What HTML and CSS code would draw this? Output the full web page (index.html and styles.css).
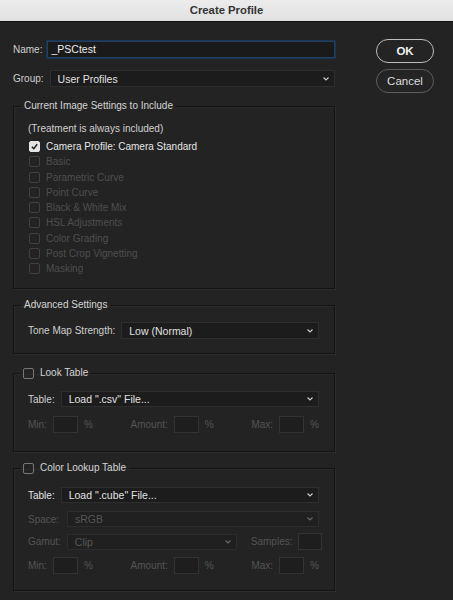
FILE: index.html
```html
<!DOCTYPE html>
<html>
<head>
<meta charset="utf-8">
<title>Create Profile</title>
<link rel="stylesheet" href="styles.css">
</head>
<body>
<div class="titlebar">Create Profile</div>
<div class="content">
  <div class="left">
    <div class="row name-row">
      <span class="lbl">Name:</span>
      <div class="textfield focus">_PSCtest</div>
    </div>
    <div class="row group-row">
      <span class="lbl">Group:</span>
      <div class="select"><span>User Profiles</span><svg class="chev" viewBox="0 0 6 4" width="6" height="4"><polyline points="0.5,0.5 3,3 5.5,0.5" fill="none" stroke="#c8c8c8" stroke-width="1.2"/></svg></div>
    </div>

    <fieldset class="box box1">
      <legend>Current Image Settings to Include</legend>
      <div class="note">(Treatment is always included)</div>
      <div class="checks">
        <div class="check on"><span class="cb checked"><svg viewBox="0 0 10 10" width="9" height="9"><polyline points="2,5.2 4.2,7.5 8,2.5" fill="none" stroke="#1a1a1a" stroke-width="1.6"/></svg></span>Camera Profile: Camera Standard</div>
        <div class="check dis"><span class="cb"></span>Basic</div>
        <div class="check dis"><span class="cb"></span>Parametric Curve</div>
        <div class="check dis"><span class="cb"></span>Point Curve</div>
        <div class="check dis"><span class="cb"></span>Black &amp; White Mix</div>
        <div class="check dis"><span class="cb"></span>HSL Adjustments</div>
        <div class="check dis"><span class="cb"></span>Color Grading</div>
        <div class="check dis"><span class="cb"></span>Post Crop Vignetting</div>
        <div class="check dis"><span class="cb"></span>Masking</div>
      </div>
    </fieldset>

    <fieldset class="box box2">
      <legend>Advanced Settings</legend>
      <div class="row tone-row">
        <span class="lbl">Tone Map Strength:</span>
        <div class="select"><span>Low (Normal)</span><svg class="chev" viewBox="0 0 6 4" width="6" height="4"><polyline points="0.5,0.5 3,3 5.5,0.5" fill="none" stroke="#c8c8c8" stroke-width="1.2"/></svg></div>
      </div>
    </fieldset>

    <fieldset class="box box3">
      <legend class="cblegend"><span class="cb en"></span>Look Table</legend>
      <div class="row table-row">
        <span class="lbl">Table:</span>
        <div class="select"><span>Load ".csv" File...</span><svg class="chev" viewBox="0 0 6 4" width="6" height="4"><polyline points="0.5,0.5 3,3 5.5,0.5" fill="none" stroke="#c8c8c8" stroke-width="1.2"/></svg></div>
      </div>
      <div class="pct-row">
        <div class="pct"><span class="dlbl">Min:</span><span class="numbox"></span><span class="dlbl">%</span></div>
        <div class="pct"><span class="dlbl">Amount:</span><span class="numbox"></span><span class="dlbl">%</span></div>
        <div class="pct"><span class="dlbl">Max:</span><span class="numbox"></span><span class="dlbl">%</span></div>
      </div>
    </fieldset>

    <fieldset class="box box4">
      <legend class="cblegend"><span class="cb en"></span>Color Lookup Table</legend>
      <div class="row table-row">
        <span class="lbl strong">Table:</span>
        <div class="select"><span>Load ".cube" File...</span><svg class="chev" viewBox="0 0 6 4" width="6" height="4"><polyline points="0.5,0.5 3,3 5.5,0.5" fill="none" stroke="#c8c8c8" stroke-width="1.2"/></svg></div>
      </div>
      <div class="row space-row">
        <span class="dlbl wl">Space:</span>
        <div class="select disabled"><span>sRGB</span><svg class="chev" viewBox="0 0 6 4" width="6" height="4"><polyline points="0.5,0.5 3,3 5.5,0.5" fill="none" stroke="#666" stroke-width="1.2"/></svg></div>
      </div>
      <div class="row gamut-row">
        <span class="dlbl wl">Gamut:</span>
        <div class="select disabled gamut"><span>Clip</span><svg class="chev" viewBox="0 0 6 4" width="6" height="4"><polyline points="0.5,0.5 3,3 5.5,0.5" fill="none" stroke="#666" stroke-width="1.2"/></svg></div>
        <span class="dlbl samples">Samples:</span>
        <span class="numbox"></span>
      </div>
      <div class="pct-row last">
        <div class="pct"><span class="dlbl">Min:</span><span class="numbox"></span><span class="dlbl">%</span></div>
        <div class="pct"><span class="dlbl">Amount:</span><span class="numbox"></span><span class="dlbl">%</span></div>
        <div class="pct"><span class="dlbl">Max:</span><span class="numbox"></span><span class="dlbl">%</span></div>
      </div>
    </fieldset>
  </div>

  <div class="right">
    <button class="btn ok">OK</button>
    <button class="btn cancel">Cancel</button>
  </div>
</div>
</body>
</html>
```

FILE: styles.css
```css
* { box-sizing: border-box; }
html, body {
  margin: 0;
  padding: 0;
}
body {
  width: 453px;
  height: 600px;
  overflow: hidden;
  background: #232323;
  font-family: "Liberation Sans", Arial, sans-serif;
  font-size: 10px;
  color: #d6d6d6;
}
.titlebar {
  height: 22px;
  background: linear-gradient(#ececec, #e0e0e0);
  border-bottom: 1px solid #111;
  text-align: center;
  font-weight: bold;
  font-size: 11.3px;
  line-height: 21px;
  color: #333;
}
.content {
  display: flex;
  padding: 17px 19px 0 13px;
}
.left {
  width: 322px;
  margin-top: 2px;
}
.right {
  margin-left: auto;
  display: flex;
  flex-direction: column;
  gap: 6px;
}
.row {
  display: flex;
  align-items: center;
}
.lbl {
  color: #cfcfcf;
  white-space: nowrap;
}
.lbl.strong { color: #e2e2e2; }
.dlbl {
  color: #545454;
  white-space: nowrap;
}
.name-row { height: 17px; gap: 5px; }
.group-row { height: 17px; gap: 6px; margin-top: 12px; }
.textfield {
  flex: 1;
  height: 17px;
  background: #1a1a1a;
  border: 1px solid #203f63;
  box-shadow: 0 0 0 1px #1a3452;
  color: #ededed;
  padding-left: 3px;
  line-height: 15px;
  font-size: 10.5px;
}
.select {
  flex: 1;
  display: flex;
  align-items: center;
  justify-content: space-between;
  height: 17px;
  background: #1c1c1c;
  border: 1px solid #2e2e2e;
  padding: 0 5px 0 7px;
  color: #e0e0e0;
  font-size: 10.5px;
}
.select.disabled {
  background: #202020;
  border-color: #2c2c2c;
  color: #555;
}
.chev { display: block; }

.box {
  margin: 0;
  border: 1px solid #141414;
  box-shadow: 1px 1px 0 #2d2d2d, inset 1px 1px 0 #2a2a2a;
  min-width: 0;
}
.box legend {
  margin-left: -7px;
  padding: 0 3px;
  line-height: 12px;
  color: #d4d4d4;
}
.box1 {
  margin-top: 13px;
  padding: 9px 14px 12px 14px;
}
.note {
  line-height: 15px;
  color: #d0d0d0;
}
.checks { margin-top: 3px; }
.check {
  display: flex;
  align-items: center;
  height: 15.25px;
  white-space: nowrap;
}
.check.on { color: #e6e6e6; }
.check.dis { color: #4e4e4e; }
.cb {
  width: 11px;
  height: 11px;
  border: 1px solid #404040;
  border-radius: 2px;
  margin-right: 6px;
  margin-left: 1px;
  display: inline-flex;
  align-items: center;
  justify-content: center;
  flex: none;
}
.cb.checked {
  background: #e4e4e4;
  border-color: #e4e4e4;
}
.cb.en {
  border-color: #777;
  margin-left: 0;
  margin-right: 6px;
}
.box .cblegend {
  display: flex;
  align-items: center;
  margin-left: -8px;
}

.box2 {
  margin-top: 10px;
  padding: 11px 15px 14px 14px;
}
.tone-row { height: 17px; gap: 6px; }

.box3 {
  margin-top: 13px;
  padding: 12px 15px 18px 14px;
}
.table-row { height: 16px; gap: 6px; }
.table-row .select { height: 16px; }
.pct-row {
  display: flex;
  justify-content: space-between;
  margin-top: 9px;
  height: 17px;
}
.pct {
  display: flex;
  align-items: center;
  gap: 6px;
}
.numbox {
  width: 25px;
  height: 17px;
  background: #1e1e1e;
  border: 1px solid #333;
  flex: none;
}

.box4 {
  margin-top: 10px;
  padding: 13px 15px 16px 14px;
}
.space-row { height: 16px; margin-top: 8px; gap: 6px; }
.space-row .select, .gamut-row .select { height: 16px; }
.wl { width: 33px; }
.gamut-row { height: 17px; margin-top: 6px; gap: 6px; }
.select.gamut { flex: none; width: 170px; }
.samples { margin-left: 8px; }
.gamut-row .numbox { width: 24px; margin-left: 0; margin-right: -2px; }
.pct-row.last { margin-top: 7px; }

.btn {
  width: 58px;
  height: 24px;
  border-radius: 12px;
  background: #242424;
  font-family: "Liberation Sans", Arial, sans-serif;
  font-size: 11.5px;
  padding: 0;
  cursor: default;
}
.btn.ok {
  border: 1.5px solid #bdbdbd;
  color: #f2f2f2;
  font-weight: bold;
}
.btn.cancel {
  border: 1.5px solid #5e5e5e;
  color: #dedede;
}
```
